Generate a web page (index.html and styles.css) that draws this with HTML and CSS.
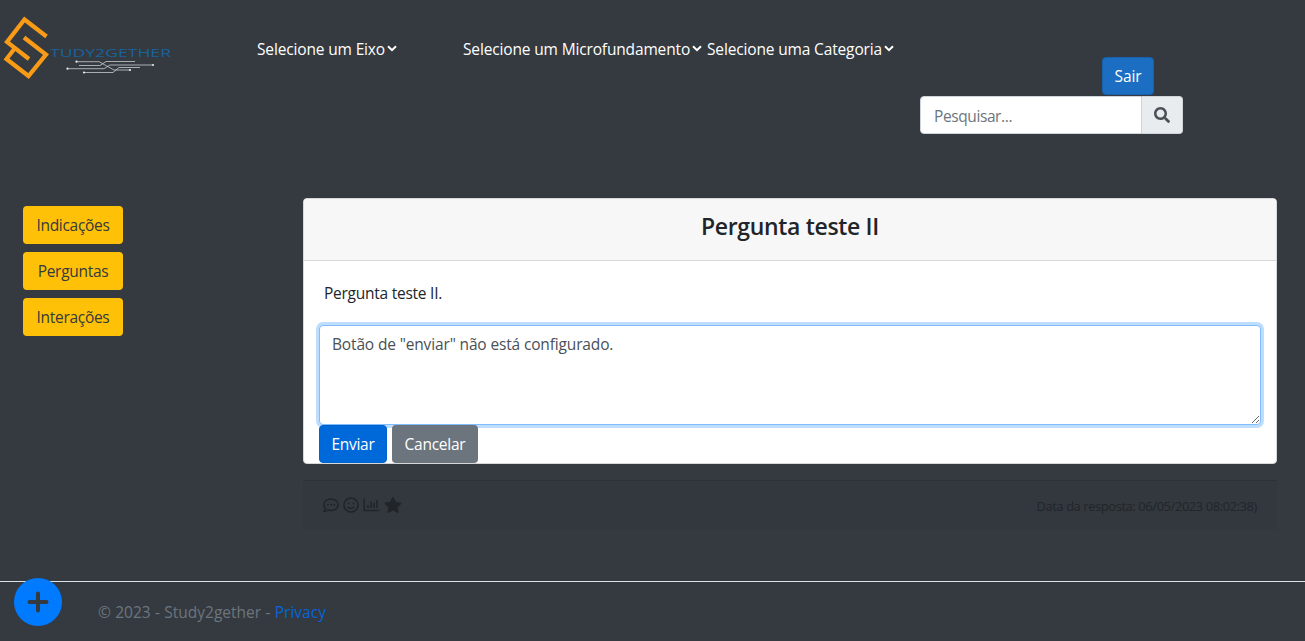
FILE: index.html
```html
<!DOCTYPE html>
<html lang="pt-BR">
<head>
<meta charset="utf-8">
<title>Study2gether</title>
<link rel="stylesheet" href="styles.css">
</head>
<body>
<header class="topbar">
  <svg class="logo" width="180" height="80" viewBox="0 0 180 80" role="img" aria-label="Study2gether">
    <g fill="none" stroke="#f99b16" stroke-width="4.2">
      <path d="M46.500 36.500L24.500 19.500L7 42L29 59"/>
      <path d="M24 37.500L46 54.500L28.500 76L6.500 59L15 48"/>
    </g>
    <text class="logo-text" x="50" y="57.300" textLength="121" lengthAdjust="spacingAndGlyphs">TUDY2GETHER</text>
    <g fill="none" stroke="#c8ccd0" stroke-width=".8">
      <path d="M77 61.700H99L114 70H130M79 65.500H100L106 61.500H135M68 68.700H104L110 65H152M84 72.500H113L119 67.500H140"/>
    </g>
    <g fill="#e9ecef"><circle cx="76.500" cy="61.700" r="1.100"/><circle cx="153" cy="65" r="1.100"/><circle cx="67.500" cy="68.700" r="1.100"/><circle cx="84" cy="72.500" r="1.100"/><circle cx="130" cy="70" r="1.100"/></g>
  </svg>
  <nav class="filters">
    <button class="pick pick-eixo"><span>Selecione um Eixo</span><svg class="chev" viewBox="0 0 10 7"><path d="M1 1.200L5 5.200L9 1.200"/></svg></button>
    <button class="pick pick-micro"><span>Selecione um Microfundamento</span><svg class="chev" viewBox="0 0 10 7"><path d="M1 1.200L5 5.200L9 1.200"/></svg></button>
    <button class="pick pick-cat"><span>Selecione uma Categoria</span><svg class="chev" viewBox="0 0 10 7"><path d="M1 1.200L5 5.200L9 1.200"/></svg></button>
  </nav>
  <div class="account">
    <button class="btn btn-exit">Sair</button>
    <form class="search">
      <input class="search-input" type="text" placeholder="Pesquisar...">
      <span class="search-icon"><svg width="16" height="16" viewBox="0 0 512 512"><path fill="#495057" d="M505 442.700L405.300 343c-4.500-4.500-10.600-7-17-7H372c27.600-35.300 44-79.700 44-128C416 93.100 322.900 0 208 0S0 93.100 0 208s93.100 208 208 208c48.300 0 92.700-16.400 128-44v16.300c0 6.400 2.500 12.500 7 17l99.700 99.700c9.400 9.400 24.600 9.400 33.900 0l28.300-28.300c9.400-9.400 9.400-24.600.1-34zM208 336c-70.700 0-128-57.200-128-128 0-70.700 57.200-128 128-128 70.700 0 128 57.200 128 128 0 70.700-57.200 128-128 128z"/></svg></span>
    </form>
  </div>
</header>

<main class="content">
  <aside class="side">
    <button class="btn btn-side">Indicações</button>
    <button class="btn btn-side">Perguntas</button>
    <button class="btn btn-side">Interações</button>
  </aside>
  <section class="thread">
    <article class="card">
      <h1 class="card-title"><span>Pergunta teste II</span></h1>
      <p class="question">Pergunta teste II.</p>
      <textarea class="answer" spellcheck="false">Botão de "enviar" não está configurado.</textarea>
      <div class="actions">
        <button class="btn btn-send">Enviar</button>
        <button class="btn btn-cancel">Cancelar</button>
      </div>
    </article>
    <div class="meta">
      <div class="icons">
        <svg width="16" height="16" viewBox="0 0 16 16"><path class="line" d="M8 2C12 2 15.200 4.600 15.200 7.800S12 13.500 8 13.500C6.900 13.500 5.900 13.300 5 13C4 13.800 2.600 14.400 1 14.400C1.800 13.500 2.300 12.500 2.400 11.500C1.400 10.500 .8 9.200 .8 7.800C.8 4.600 4 2 8 2Z"/><circle cx="4.900" cy="7.800" r="1"/><circle cx="8" cy="7.800" r="1"/><circle cx="11.100" cy="7.800" r="1"/></svg>
        <svg width="16" height="16" viewBox="0 0 16 16"><circle class="line" cx="8" cy="8" r="7"/><circle cx="5.500" cy="6.400" r="1"/><circle cx="10.500" cy="6.400" r="1"/><path class="line" d="M4.800 9.700C6.400 11.800 9.600 11.800 11.200 9.700"/></svg>
        <svg width="17" height="16" viewBox="0 0 17 16"><path class="line" d="M1.200 1.500V13.500H16.500M5 11V8M8 11V4.500M11 11V6M14 11V3"/></svg>
        <svg width="18" height="16" viewBox="0 0 18 16"><path d="M8.200.6Q9 -.6 9.800.6L11.900 4.800L16.600 5.500Q17.800 5.900 17.100 7L13.700 10.300L14.500 14.900Q14.400 16.200 13.200 15.800L9 13.600L4.800 15.800Q3.600 16.200 3.500 14.900L4.300 10.300L.9 7Q.2 5.900 1.400 5.500L6.100 4.800Z"/></svg>
      </div>
      <span class="date">Data da resposta: 06/05/2023 08:02:38)</span>
    </div>
  </section>
</main>

<footer class="footer">
  <button class="add" aria-label="Adicionar"><svg width="22" height="22" viewBox="0 0 22 22"><path d="M11 2.500V19.500M2.500 11H19.500"/></svg></button>
  <span class="copy">© 2023 - Study2gether - <a href="#">Privacy</a></span>
</footer>
</body>
</html>
```
FILE: styles.css
```css
* { box-sizing: border-box; }
body {
  margin: 0;
  width: 1305px;
  height: 641px;
  overflow: hidden;
  display: flex;
  flex-direction: column;
  background: #343a40;
  color: #212529;
  font: 15.5px/24px "Open Sans", "Noto Sans", sans-serif;
  letter-spacing: -.15px;
}
button, input, textarea { font: inherit; letter-spacing: inherit; }
button { border: 0; padding: 0; white-space: nowrap; }

.topbar { display: flex; height: 198px; }
.logo { flex: none; }
.logo-text { font: 11px "Open Sans", sans-serif; fill: #17639e; letter-spacing: 0; }
.filters { display: flex; padding: 37px 0 0 77px; width: 740px; height: 61px; }
.pick { display: flex; align-items: center; background: none; color: #fff; height: 24px; }
.pick-eixo { width: 206px; }
.pick-micro { width: 244px; }
.chev { width: 10px; height: 7px; margin: -2px 0 0 2px; flex: none; }
.chev path { fill: none; stroke: #fff; stroke-width: 2; }
.account { display: flex; flex-direction: column; width: 263px; padding-top: 57px; }

.btn { height: 38px; border-radius: 4px; color: #fff; }
.btn-exit { width: 52px; margin-left: 182px; background: #1b6ec2; border: 1px solid #1861ac; }
.search { display: flex; margin-top: 1px; height: 38px; }
.search-input { width: 222px; padding: 2px 12px 0 13px; border: 1px solid #ced4da; border-radius: 4px 0 0 4px; background: #fff; letter-spacing: -.4px; }
.search-input::placeholder { color: #6c757d; opacity: 1; }
.search-icon { display: flex; align-items: center; justify-content: center; width: 41px; background: #e9ecef; border: 1px solid #ced4da; border-left: 0; border-radius: 0 4px 4px 0; }

.content { display: flex; height: 383px; }
.side { display: flex; flex-direction: column; gap: 8px; width: 303px; padding: 8px 0 0 23px; }
.btn-side { width: 100px; background: #ffc107; color: #343a40; letter-spacing: -.3px; }
.thread { width: 974px; }
.card { height: 266px; background: #fff; border: 1px solid #d6d8db; border-radius: 4px; }
.card-title { margin: 0; height: 62px; padding-top: 12px; border-bottom: 1px solid #d8d8d8; border-radius: 3px 3px 0 0; background: #f7f7f7; text-align: center; font-size: 23px; font-weight: 600; line-height: 30px; letter-spacing: -.33px; }
.question { margin: 0; padding: 20px 20px 0; height: 64px; letter-spacing: -.25px; }
.answer { display: block; width: 942px; height: 100px; margin-left: 15px; padding: 6px 12px; border: 1px solid #80bdff; border-radius: 4px; outline: 0; box-shadow: 0 0 0 3px #bfdeff; color: #495057; background: #fff; resize: vertical; overflow: hidden; }
.actions { display: flex; gap: 5px; margin-left: 15px; position: relative; }
.btn-send { width: 68px; background: #0069d9; border: 1px solid #0062cc; letter-spacing: -.3px; }
.btn-cancel { width: 86px; background: #6c757d; letter-spacing: -.25px; }
.meta { display: flex; justify-content: space-between; align-items: center; height: 50px; margin-top: 16px; padding: 0 20px 1px; background: #33383e; border-top: 1px solid #2d3238; border-radius: 0 0 4px 4px; }
.icons { display: flex; gap: 4px; fill: #212529; }
.line { fill: none; stroke: #212529; stroke-width: 1.6; }
.date { font-size: 12.8px; letter-spacing: -.35px; padding-top: 2px; }

.footer { display: flex; height: 60px; border-top: 1px solid #dee2e6; color: #6c757d; }
.add { display: flex; align-items: center; justify-content: center; width: 48px; height: 48px; margin: -4px 0 0 14px; border-radius: 50%; background: #007bff; z-index: 1; }
.add path { fill: none; stroke: #343a40; stroke-width: 4; stroke-linecap: round; }
.copy { padding: 18px 0 0 36px; letter-spacing: 0; word-spacing: .3px; }
.copy a { color: #0366d6; text-decoration: none; }
```
